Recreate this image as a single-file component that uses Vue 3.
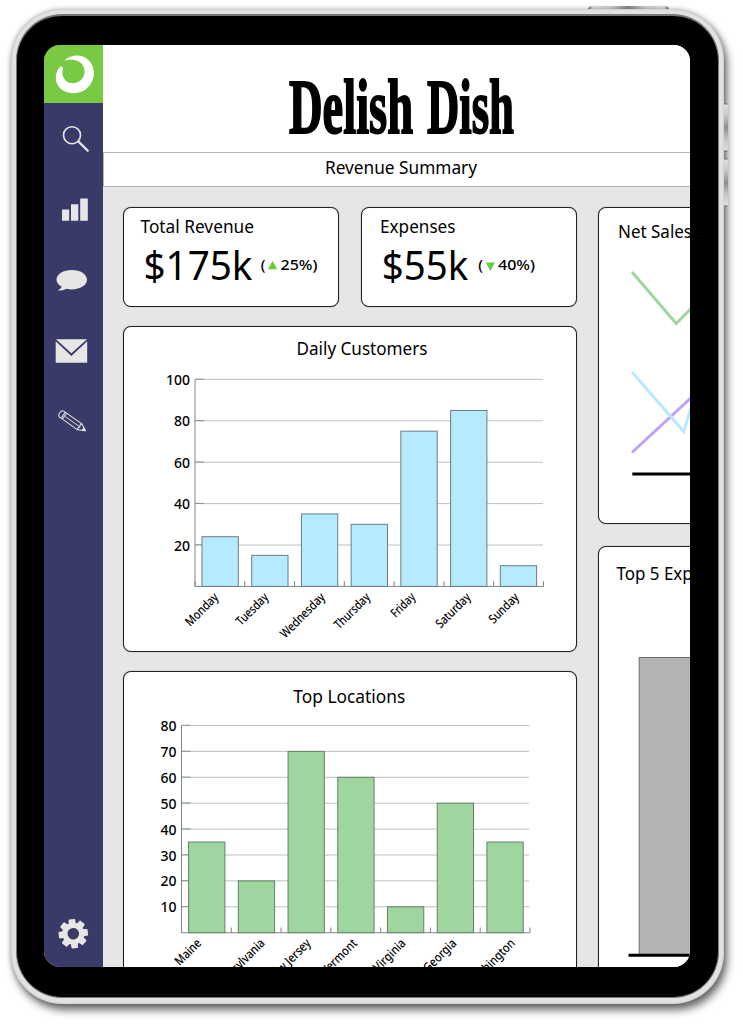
<script setup>
const daily = {
  left: 195, right: 543.5, base: 586.4, unit: 2.07, first: 202,
  ticks: [20, 40, 60, 80, 100],
  bars: [
    { label: 'Monday', value: 24, end: 219.3, len: 41 },
    { label: 'Tuesday', value: 15, end: 269.3, len: 40 },
    { label: 'Wednesday', value: 35, end: 325.8, len: 57.5 },
    { label: 'Thursday', value: 30, end: 371, len: 45 },
    { label: 'Friday', value: 75, end: 416, len: 28.5 },
    { label: 'Saturday', value: 85, end: 471.5, len: 43.5 },
    { label: 'Sunday', value: 10, end: 519.8, len: 37 }
  ]
}
const locations = {
  left: 181.5, right: 529.7, base: 932.7, unit: 2.59, first: 188.6,
  ticks: [10, 20, 30, 40, 50, 60, 70, 80],
  bars: [
    { label: 'Maine', value: 35, end: 202, len: 31.5 },
    { label: 'Pennsylvania', value: 20, end: 265.5, len: 67 },
    { label: 'New Jersey', value: 70, end: 311.5, len: 56 },
    { label: 'Vermont', value: 60, end: 358, len: 45 },
    { label: 'Virginia', value: 10, end: 406.5, len: 40 },
    { label: 'Georgia', value: 50, end: 457.3, len: 41 },
    { label: 'Washington', value: 35, end: 515.8, len: 62 }
  ]
}
const charts = [
  { id: 'daily', title: 'Daily Customers', tx: 296.5, ty: 355.3, tw: 131, view: '124 327 452 324', labelY: 598, ...daily },
  { id: 'locations', title: 'Top Locations', tx: 293.3, ty: 702.7, tw: 112, view: '124 672 452 324', labelY: 944, ...locations }
]
const step = 49.72
const teeth = [0, 45, 90, 135, 180, 225, 270, 315]
</script>

<template>
  <div class="stage">
    <i class="button power"></i>
    <i class="button volume up"></i>
    <i class="button volume down"></i>
    <div class="device">
      <div class="bezel">
        <div class="screen">
          <nav class="sidebar">
            <svg class="logo" viewBox="44 45 59 58">
              <path fill="#fff" d="M64.3 60.8 C67.5 57.2 72.5 55.6 78 55.6 C87.5 56.3 94 64 94 73.5 C93.5 84.5 85 93.2 73.5 93.3 C63 93 55.8 86.5 55.8 77.8 C55.8 73.5 57.8 69.3 60 67.1 C61.5 65.8 63.2 67 63 69 C62.4 71 62.2 73 62.6 75 C64 80 67.5 83.2 72.5 83.3 C79.5 83.3 84.6 78 84.6 71.5 C84.6 64.5 79 59.9 72.3 59.7 C69.5 59.6 67 60.1 64.3 60.8 Z" />
            </svg>
            <svg class="item" viewBox="44 103 59 71" fill="none" stroke="#e6e6e6" stroke-linecap="round">
              <circle cx="72" cy="135.2" r="8.5" stroke-width="1.6" />
              <path d="M78.3 141.4 L87.8 150.8" stroke-width="2.2" />
            </svg>
            <svg class="item" viewBox="44 174 59 71" fill="#e6e6e6">
              <path d="M62 209.5h7.2v11.3H62zM71 204.2h7.3v16.6H71zM80.2 198.5h7.6v22.3h-7.6z" />
            </svg>
            <svg class="item" viewBox="44 245 59 71" fill="#e6e6e6">
              <path d="M71.7 270 C80.4 270 87 274.2 87 279.8 C87 285.3 80.4 289.4 71.7 289.4 C69.7 289.4 68.2 289.2 66.5 288.8 C64 290.3 61 290.8 57.8 290.4 C59.8 289.4 61.2 288.2 61.7 286.8 C58.3 285 56.5 282.5 56.5 279.8 C56.5 274.2 63.2 270 71.7 270 Z" />
            </svg>
            <svg class="item" viewBox="44 316 59 71" fill="#e6e6e6">
              <path d="M56 339.2h31L71.4 353.2zM55.7 341.2L71.4 356 87.2 341.2V362.8H55.7z" />
            </svg>
            <svg class="item" viewBox="44 387 59 71" fill="none" stroke="#e6e6e6" stroke-width="1" stroke-linejoin="round">
              <g transform="translate(72.2 421.5) rotate(35)">
                <path d="M-12.5 -3.7 H9.3 L16 0 L9.3 3.7 H-12.5 Q-15.2 3.7 -15.2 0 Q-15.2 -3.7 -12.5 -3.7 Z M-11 -3.7 V3.7 M-9.4 -3.7 V3.7 M9.3 -3.7 Q7.8 -1.8 9.3 0 Q7.8 1.8 9.3 3.7" />
                <path d="M-9 0 H9.3" stroke-width=".8" />
                <path d="M13.2 -1.5L16 0 13.2 1.5z" fill="#e6e6e6" />
              </g>
            </svg>
            <svg class="item gear" viewBox="44 898 59 71">
              <g transform="translate(73.3 933.7) rotate(-6)" fill="#e6e6e6">
                <path v-for="a in teeth" :key="a" :transform="`rotate(${a})`" d="M-3.7 -9 L-3.2 -14.1 Q-3.1 -14.6 -2.5 -14.6 H2.5 Q3.1 -14.6 3.2 -14.1 L3.7 -9 Z" />
                <circle r="8.4" fill="none" stroke="#e6e6e6" stroke-width="5.2" />
              </g>
            </svg>
          </nav>

          <main class="main">
            <header class="brand">
              <svg viewBox="103 45 587 107" class="brand-name">
                <text x="289" y="133" textLength="124" lengthAdjust="spacingAndGlyphs">Delish</text>
                <text x="427" y="133" textLength="87" lengthAdjust="spacingAndGlyphs">Dish</text>
              </svg>
            </header>
            <div class="subtitle">
              <svg viewBox="104 153 586 33">
                <text class="heading" x="325" y="174.2" textLength="152" lengthAdjust="spacingAndGlyphs">Revenue Summary</text>
              </svg>
            </div>

            <div class="board">
              <div class="column wide">
                <div class="stats">
                  <section class="card stat">
                    <svg viewBox="124 208 214 98">
                      <text class="heading" x="140.5" y="233" textLength="113.5" lengthAdjust="spacingAndGlyphs">Total Revenue</text>
                      <text class="figure" x="143.5" y="280" textLength="109" lengthAdjust="spacingAndGlyphs">$175k</text>
                      <text class="delta" x="260.8" y="270.4">(</text>
                      <path fill="#66cc42" d="M268 269.3h9.2L272.6 260.8z" />
                      <text class="delta" x="280.5" y="270.4" textLength="37" lengthAdjust="spacingAndGlyphs">25%)</text>
                    </svg>
                  </section>
                  <section class="card stat">
                    <svg viewBox="362 208 214 98">
                      <text class="heading" x="380" y="233" textLength="75.5" lengthAdjust="spacingAndGlyphs">Expenses</text>
                      <text class="figure" x="381.8" y="280" textLength="86.5" lengthAdjust="spacingAndGlyphs">$55k</text>
                      <text class="delta" x="478.3" y="270.4">(</text>
                      <path fill="#66cc42" d="M485.8 262.6h9.2L490.4 271z" />
                      <text class="delta" x="498" y="270.4" textLength="37" lengthAdjust="spacingAndGlyphs">40%)</text>
                    </svg>
                  </section>
                </div>

                <section v-for="c in charts" :key="c.id" class="card chart" :class="c.id">
                  <svg :viewBox="c.view">
                    <text class="heading" :x="c.tx" :y="c.ty" :textLength="c.tw" lengthAdjust="spacingAndGlyphs">{{ c.title }}</text>
                    <g v-for="t in c.ticks" :key="t">
                      <line class="grid" :x1="c.left" :x2="c.right - .5" :y1="c.base - t * c.unit" :y2="c.base - t * c.unit" />
                      <line class="tick" :x1="c.left" :x2="c.left + 9" :y1="c.base - t * c.unit - .2" :y2="c.base - t * c.unit - .2" />
                      <text class="value" :x="c.left - 5" :y="c.base - t * c.unit + 5.5">{{ t }}</text>
                    </g>
                    <path class="axis" :d="`M${c.left} ${c.base - c.ticks[c.ticks.length - 1] * c.unit}V${c.base}H${c.right}`" />
                    <line v-for="n in 8" :key="n" class="notch" :x1="c.left + (n - 1) * 49.78" :x2="c.left + (n - 1) * 49.78" :y1="c.base - 5.2" :y2="c.base" />
                    <g v-for="(b, i) in c.bars" :key="b.label">
                      <rect class="bar" :x="c.first + i * step" :y="c.base - b.value * c.unit" width="36.3" :height="b.value * c.unit" />
                      <text class="name" :transform="`translate(${b.end} ${c.labelY}) rotate(-45)`" :textLength="b.len" lengthAdjust="spacingAndGlyphs">{{ b.label }}</text>
                    </g>
                  </svg>
                </section>
              </div>

              <div class="column side">
                <section class="card sales">
                  <svg viewBox="599 208 214 315" fill="none" stroke-width="3">
                    <text class="heading" x="618" y="237.8" textLength="74" lengthAdjust="spacingAndGlyphs">Net Sales</text>
                    <path stroke="#9fd69f" d="M632 272L676.2 323.5 700 299.5" />
                    <path stroke="#c19fff" d="M632 452.5L700 389.5" />
                    <path stroke="#b5eaff" d="M632 372L683.7 431.5 700 379" />
                    <path stroke="#000" d="M632.3 474H780" />
                  </svg>
                </section>
                <section class="card expenses">
                  <svg viewBox="599 547 214 449">
                    <text class="heading" x="616.5" y="579.6" textLength="122" lengthAdjust="spacingAndGlyphs">Top 5 Expenses</text>
                    <rect x="639.2" y="657.5" width="100" height="297" fill="#b3b3b3" stroke="#6b6b6b" />
                    <path stroke="#000" stroke-width="3" d="M628.5 955.2H780" />
                  </svg>
                </section>
              </div>
            </div>
          </main>
        </div>
      </div>
    </div>
  </div>
</template>

<style>
html, body { margin: 0; background: #fff; overflow: hidden; }
</style>

<style scoped>
.stage {
  position: relative;
  box-sizing: border-box;
  width: 743px;
  height: 1024px;
  padding: 9px 19px 20px 11px;
  background: #fff;
  overflow: hidden;
  font-family: "Noto Sans", "Open Sans", sans-serif;
}
svg { display: block; }
.device {
  position: relative;
  box-sizing: border-box;
  width: 713px;
  height: 995px;
  padding: 5px 5px 6px 5px;
  border-radius: 51px;
  background: #e2e2e2;
  box-shadow: inset 0 0 2px #aaa, 3px 6px 9px rgba(0, 0, 0, .58), 0 0 5px rgba(0, 0, 0, .22);
}
.bezel {
  box-sizing: border-box;
  width: 703px;
  height: 984px;
  padding: 29px 26px 30px 27px;
  border: 1px solid #777;
  border-top-width: 2px;
  border-radius: 46px;
  background: #000;
}
.screen {
  display: flex;
  width: 646px;
  height: 922px;
  border-radius: 16px;
  background: #e6e6e6;
  overflow: hidden;
}
.button { position: absolute; }
.power {
  left: 588px;
  top: 6px;
  width: 81px;
  height: 4px;
  border-radius: 4px 4px 0 0;
  background: linear-gradient(90deg, #666, #e0e0e0 6%, #ccc 30%, #888 50%, #ccc 70%, #e0e0e0 94%, #666);
}
.volume {
  left: 724px;
  width: 4px;
  height: 49px;
  border-radius: 0 3px 3px 0;
  background: linear-gradient(#555, #ddd 5%, #c8c8c8 25%, #8c8c8c 50%, #c8c8c8 75%, #ddd 95%, #555);
  z-index: 1;
}
.up { top: 103px; }
.down { top: 158px; }

.sidebar {
  display: flex;
  flex: none;
  flex-direction: column;
  width: 59px;
  background: #3a3a68;
}
.logo { flex: none; width: 59px; height: 58px; background: #7ac943; }
.item { flex: none; width: 59px; height: 71px; }
.gear { margin-top: auto; margin-bottom: -2px; }

.main { flex: none; width: 587px; }
.brand { height: 107px; background: #fff; border-bottom: 1px solid #b3b3b3; }
.brand-name { width: 587px; height: 107px; }
.brand-name text {
  font: bold 79px "Liberation Serif", serif;
  stroke: #000;
  stroke-width: 2px;
}
.subtitle {
  height: 33px;
  border-left: 1px solid #b3b3b3;
  border-bottom: 1px solid #b3b3b3;
  background: #fff;
}
.subtitle svg { width: 586px; height: 33px; }
.board { display: flex; gap: 21px; padding: 20px 0 0 20px; }
.column { display: flex; flex: none; flex-direction: column; }
.wide { width: 454px; gap: 19px; }
.side { width: 216px; gap: 22px; }
.stats { display: flex; gap: 22px; }
.card {
  box-sizing: border-box;
  flex: none;
  border: 1px solid #222;
  border-radius: 8px;
  background: #fff;
  box-shadow: 0 0 1px rgba(0, 0, 0, .6);
  overflow: hidden;
}
.stat { width: 216px; height: 100px; }
.stat svg { width: 214px; height: 98px; }
.chart { width: 454px; height: 326px; }
.chart svg { width: 452px; height: 324px; }
.sales { height: 317px; }
.sales svg { width: 214px; height: 315px; }
.expenses { height: 451px; }
.expenses svg { width: 214px; height: 449px; }

text { fill: #000; stroke: none; }
.heading { font-size: 17.6px; }
.figure { font-size: 40.5px; }
.delta { font-size: 15px; font-weight: 500; }
.value { font-size: 14px; font-weight: 500; text-anchor: end; }
.name { font-size: 12.6px; font-weight: 500; text-anchor: end; }
.grid { stroke: #bfbfbf; stroke-width: 1; }
.tick { stroke: #8b9292; stroke-width: 1; }
.axis { fill: none; stroke: #7d8585; stroke-width: 1; }
.notch { stroke: #7d8585; stroke-width: 1; }
.bar { stroke: #6a7d82; stroke-width: 1; fill: #b5eaff; }
.locations .bar { fill: #9fd69f; stroke: #668066; }
</style>
